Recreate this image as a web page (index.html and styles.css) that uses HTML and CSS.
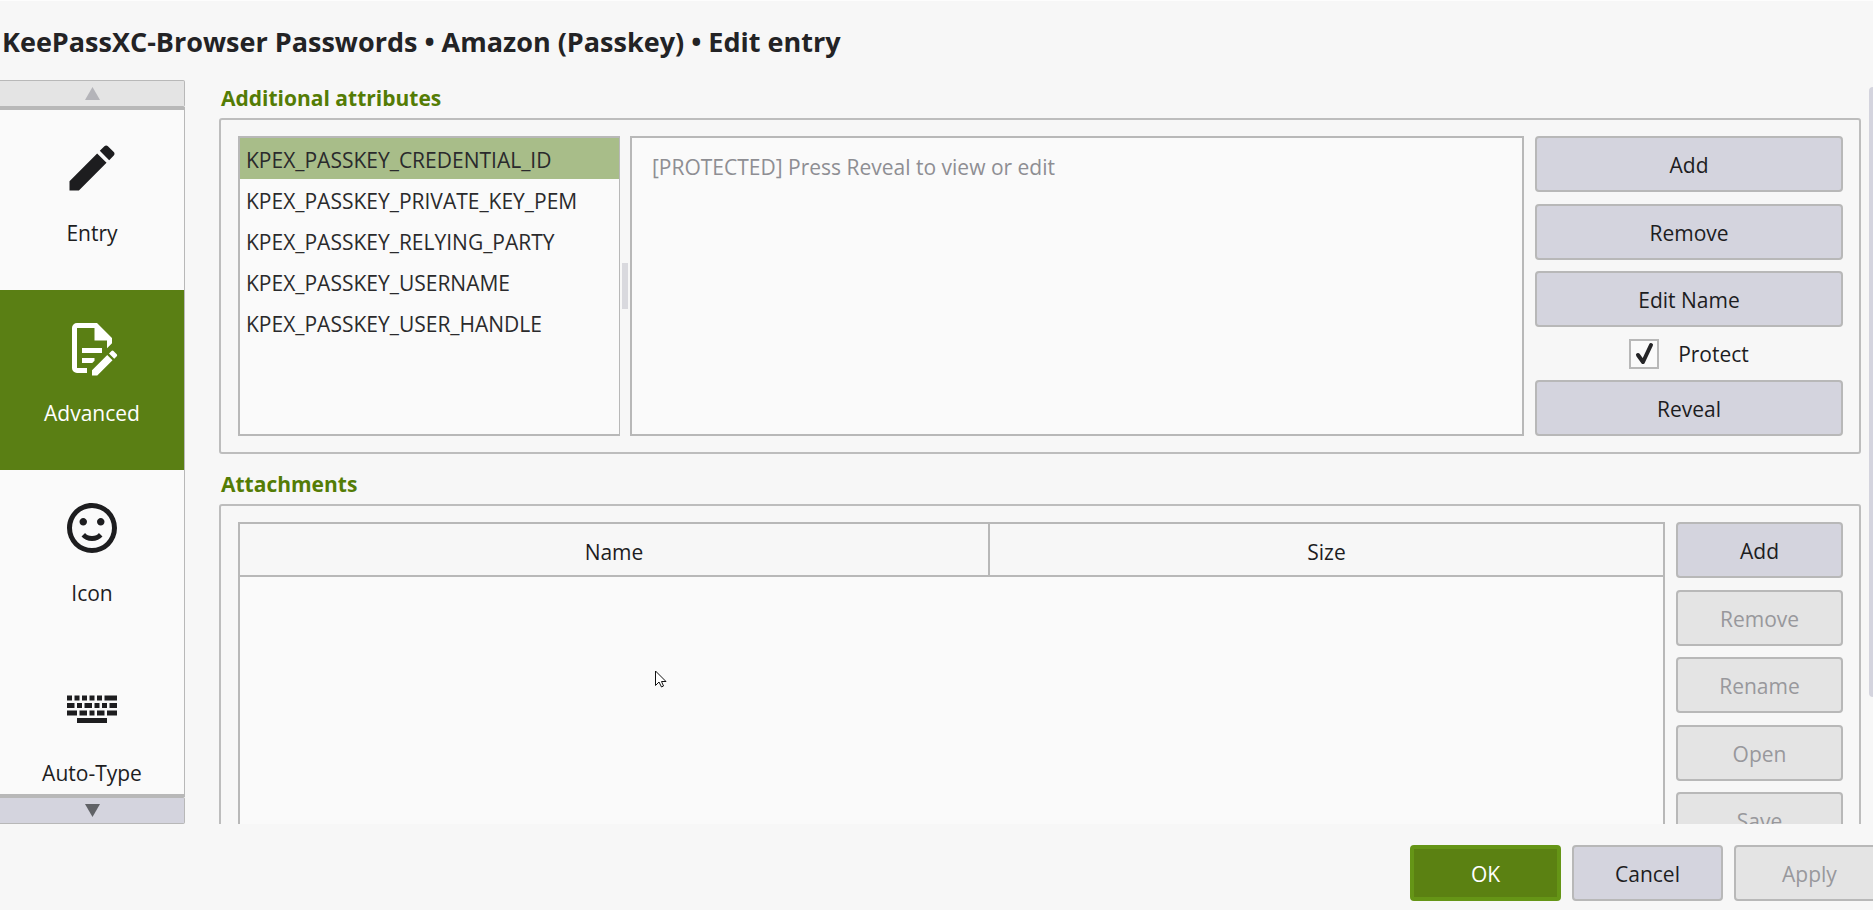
FILE: index.html
```html
<!DOCTYPE html>
<html lang="en">
<head>
    <meta charset="UTF-8">
    <meta name="viewport" content="width=device-width, initial-scale=1.0">
    <title>Edit entry</title>
    <link rel="stylesheet" href="styles.css">
</head>
<body>
    <header class="titlebar">
        <h1>KeePassXC-Browser Passwords • Amazon (Passkey) • Edit entry</h1>
    </header>

    <div class="content">
        <!-- Category list -->
        <nav class="sidebar">
            <button class="scroll-btn scroll-up" aria-label="Scroll up" disabled>
                <svg width="15" height="13" viewBox="0 0 15 13"><path d="M7.500 0L15 13H0Z"/></svg>
            </button>
            <div class="categories">
                <a href="#entry" class="category">
                    <svg class="icon" viewBox="0 0 24 24"><path d="M20.71,7.04C21.1,6.65 21.1,6 20.71,5.63L18.37,3.29C18,2.9 17.35,2.9 16.96,3.29L15.12,5.12L18.87,8.87M3,17.25V21H6.75L17.81,9.93L14.06,6.18L3,17.25Z"/></svg>
                    <span>Entry</span>
                </a>
                <a href="#advanced" class="category active">
                    <svg class="icon" viewBox="0 0 24 24"><path d="M8,12H16V14H8V12M10,20H6V4H13V9H18V12.1L20,10.1V8L14,2H6A2,2 0 0,0 4,4V20A2,2 0 0,0 6,22H10V20M8,18H12.1L13,17.1V16H8V18M20.2,13C20.3,13 20.5,13.1 20.6,13.2L21.9,14.5C22.1,14.7 22.1,15.1 21.9,15.3L20.9,16.3L18.8,14.2L19.8,13.2C19.9,13.1 20,13 20.2,13M20.2,16.9L14.1,23H12V20.9L18.1,14.8L20.2,16.9Z"/></svg>
                    <span>Advanced</span>
                </a>
                <a href="#icon" class="category">
                    <svg class="icon" viewBox="0 0 24 24"><path d="M12,2C6.47,2 2,6.5 2,12A10,10 0 0,0 12,22A10,10 0 0,0 22,12A10,10 0 0,0 12,2M12,20A8,8 0 0,1 4,12A8,8 0 0,1 12,4A8,8 0 0,1 20,12A8,8 0 0,1 12,20M10,9.5C10,10.3 9.3,11 8.5,11C7.7,11 7,10.3 7,9.5C7,8.7 7.7,8 8.5,8C9.3,8 10,8.7 10,9.5M17,9.5C17,10.3 16.3,11 15.5,11C14.7,11 14,10.3 14,9.5C14,8.7 14.7,8 15.5,8C16.3,8 17,8.7 17,9.5M12,17.23C10.25,17.23 8.71,16.5 7.81,15.42L9.23,14C9.68,14.72 10.75,15.23 12,15.23C13.25,15.23 14.32,14.72 14.77,14L16.19,15.42C15.29,16.5 13.75,17.23 12,17.23Z"/></svg>
                    <span>Icon</span>
                </a>
                <a href="#autotype" class="category">
                    <svg class="icon" viewBox="0 0 24 24"><path d="M6,16H18V18H6V16M6,13V15H2V13H6M7,15V13H10V15H7M11,15V13H13V15H11M14,15V13H17V15H14M18,15V13H22V15H18M2,10H5V12H2V10M19,12V10H22V12H19M18,12H16V10H18V12M8,12H6V10H8V12M12,12H9V10H12V12M15,12H13V10H15V12M2,9V7H4V9H2M5,9V7H7V9H5M8,9V7H10V9H8M11,9V7H13V9H11M14,9V7H16V9H14M17,9V7H22V9H17Z"/></svg>
                    <span>Auto-Type</span>
                </a>
            </div>
            <button class="scroll-btn scroll-down" aria-label="Scroll down">
                <svg width="15" height="13" viewBox="0 0 15 13"><path d="M0 0H15L7.500 13Z"/></svg>
            </button>
        </nav>

        <main class="page">
            <section class="group">
                <h2>Additional attributes</h2>
                <div class="group-box">
                    <ul class="attributes" role="listbox" aria-label="Additional attributes">
                        <li role="option" class="selected" aria-selected="true">KPEX_PASSKEY_CREDENTIAL_ID</li>
                        <li role="option">KPEX_PASSKEY_PRIVATE_KEY_PEM</li>
                        <li role="option">KPEX_PASSKEY_RELYING_PARTY</li>
                        <li role="option">KPEX_PASSKEY_USERNAME</li>
                        <li role="option">KPEX_PASSKEY_USER_HANDLE</li>
                    </ul>
                    <div class="splitter"></div>
                    <textarea class="attribute-value" aria-label="Attribute value" disabled>[PROTECTED] Press Reveal to view or edit</textarea>
                    <div class="actions actions-wide">
                        <button class="btn">Add</button>
                        <button class="btn">Remove</button>
                        <button class="btn">Edit Name</button>
                        <label class="protect" for="protect">
                            <span class="check">
                                <input type="checkbox" id="protect" checked>
                                <svg class="check-mark" viewBox="0 0 30 30"><path d="M9 16L14 23L22 6"/></svg>
                            </span>
                            Protect
                        </label>
                        <button class="btn">Reveal</button>
                    </div>
                </div>
            </section>

            <section class="group">
                <h2>Attachments</h2>
                <div class="group-box">
                    <div class="attachments">
                        <table>
                            <thead>
                                <tr>
                                    <th class="col-name">Name</th>
                                    <th>Size</th>
                                </tr>
                            </thead>
                            <tbody></tbody>
                        </table>
                    </div>
                    <div class="actions">
                        <button class="btn">Add</button>
                        <button class="btn" disabled>Remove</button>
                        <button class="btn" disabled>Rename</button>
                        <button class="btn" disabled>Open</button>
                        <button class="btn" disabled>Save</button>
                    </div>
                </div>
            </section>
        </main>
        <div class="scrollbar"></div>
    </div>

    <footer class="footer">
        <div class="dialog-buttons">
            <button class="btn btn-primary">OK</button>
            <button class="btn">Cancel</button>
            <button class="btn" disabled>Apply</button>
        </div>
    </footer>

    <!-- Mouse pointer -->
    <svg class="pointer" width="12" height="18" viewBox="0 0 12 18"><path d="M0.500 1V15.500L4 12L6.500 17L8.500 16L6.500 11.500H11Z"/></svg>
</body>
</html>
```
FILE: styles.css
```css
* {
    box-sizing: border-box;
}
body {
    margin: 0;
    height: 100vh;
    display: flex;
    flex-direction: column;
    overflow: hidden;
    background-color: #f7f7f7;
    color: #1d1d1f;
    font-family: "Open Sans", "Noto Sans", sans-serif;
    font-size: 21px;
    line-height: 28px;
}
button, textarea {
    font: inherit;
    color: inherit;
}

/* Title */
.titlebar {
    height: 80px;
    padding: 22px 2px;
    border-top: 1px solid #fdfdfd;
}
h1 {
    margin: 0;
    color: #232325;
    font-size: 27px;
    font-weight: 700;
    line-height: 38px;
    white-space: nowrap;
}

.content {
    flex: 1;
    min-height: 0;
    display: flex;
}

/* Sidebar */
.sidebar {
    width: 185px;
    display: flex;
    flex-direction: column;
}
.categories {
    flex: 1;
    min-height: 0;
    overflow: hidden;
    background-color: #fafafa;
    border: solid #b8b8b8;
    border-width: 3px 1px 3px 0;
}
.category {
    height: 180px;
    padding-top: 28px;
    display: flex;
    flex-direction: column;
    align-items: center;
    gap: 21px;
    color: #1d1d1f;
    text-decoration: none;
}
.category.active {
    background-color: #5a7f14;
    color: #fff;
}
.icon {
    width: 60px;
    height: 60px;
    fill: currentColor;
}
.scroll-btn {
    height: 27px;
    padding: 0;
    display: flex;
    align-items: center;
    justify-content: center;
    border: 1px solid #b8b8b8;
    border-left: none;
    border-radius: 0 2px 2px 0;
}
.scroll-up {
    background-color: #e4e4e4;
    fill: #b4b4b9;
}
.scroll-down {
    background-color: #d4d4de;
    fill: #606266;
}

/* Page */
.page {
    flex: 1;
    min-width: 0;
    overflow: hidden;
    padding: 4px 8px 0 34px;
}
.group {
    margin-bottom: 16px;
}
h2 {
    margin: 0;
    padding: 0 2px 6px;
    color: #547c05;
    font-size: 21px;
    line-height: 28px;
}
.group-box {
    display: flex;
    padding: 16px 16px 16px 17px;
    border: 2px solid #bdbdbd;
    border-radius: 3px;
}
.attributes {
    width: 382px;
    height: 300px;
    margin: 0;
    padding: 0;
    list-style: none;
    background-color: #fafafa;
    border: 2px solid #b8b8b8;
    border-right-width: 1px;
    color: #2a2a2c;
}
.attributes li {
    padding: 8px 6px 4px;
    line-height: 29px;
}
.attributes .selected {
    background-color: #a8bd89;
}
.splitter {
    width: 6px;
    height: 46px;
    margin: 0 2px;
    align-self: center;
    background-color: #d9d9de;
}
.attribute-value {
    flex: 1;
    min-width: 0;
    height: 300px;
    padding: 15px 20px;
    resize: none;
    background-color: #fafafa;
    border: 2px solid #b8b8b8;
    color: #8e8e93;
}
.actions {
    width: 167px;
    margin-left: 11px;
    display: flex;
    flex-direction: column;
    justify-content: space-between;
}
.actions-wide {
    width: 308px;
}
.btn {
    height: 56px;
    padding: 2px 0 0;
    background-color: #d4d4de;
    border: 2px solid #b8b8b8;
    border-radius: 4px;
}
.btn:disabled {
    background-color: #e4e4e4;
    color: #98989c;
}
.btn-primary {
    background-color: #5b8112;
    border: 4px solid #659516;
    color: #fff;
}
.protect {
    display: flex;
    align-items: center;
    justify-content: center;
    gap: 19px;
}
.check {
    position: relative;
    display: flex;
}
.check input {
    appearance: none;
    width: 30px;
    height: 30px;
    margin: 0;
    background-color: #fafafa;
    border: 2px solid #b8b8b8;
}
.check-mark {
    display: none;
    position: absolute;
    inset: 0;
    fill: none;
    stroke: #252527;
    stroke-width: 4;
    stroke-linecap: round;
    stroke-linejoin: round;
    pointer-events: none;
}
.check input:checked + .check-mark {
    display: block;
}

/* Attachments */
.attachments {
    flex: 1;
    height: 326px;
    background-color: #fafafa;
    border: 2px solid #b8b8b8;
}
table {
    width: 100%;
    border-spacing: 0;
}
th {
    height: 53px;
    padding: 4px 0 0;
    background-color: #f7f7f7;
    border-bottom: 2px solid #b8b8b8;
    font-weight: normal;
}
.col-name {
    width: 750px;
    border-right: 2px solid #b8b8b8;
}

.scrollbar {
    width: 4px;
    height: 610px;
    margin-top: 7px;
    background-color: #d4d4de;
    border-radius: 4px 0 0 4px;
}

/* Dialog buttons, the last one runs past the window edge */
.footer {
    overflow: hidden;
    padding: 21px 0 9px;
}
.dialog-buttons {
    display: flex;
    justify-content: flex-end;
    gap: 11px;
    margin-right: -12px;
}
.dialog-buttons .btn {
    width: 151px;
}

.pointer {
    position: absolute;
    left: 655px;
    top: 670px;
    fill: #fff;
    stroke: #111;
}
```
